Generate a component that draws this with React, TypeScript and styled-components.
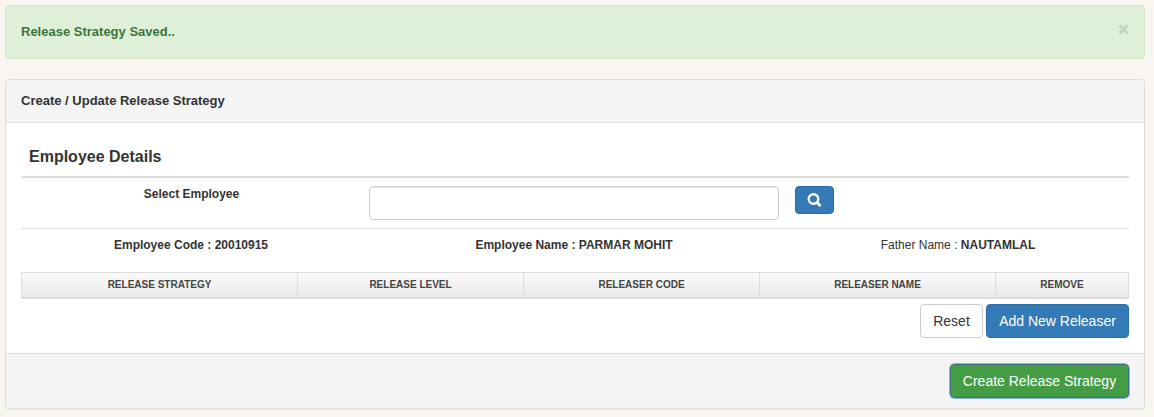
import React from 'react';
import styled, { createGlobalStyle } from 'styled-components';

const GlobalStyle = createGlobalStyle`
  *, *::before, *::after { box-sizing: border-box; }
  body {
    margin: 0;
    background: #f9f5f0;
    color: #333;
    font: 12px/20px "Liberation Sans", Arial, sans-serif;
  }
`;

const Page = styled.main`
  padding: 5px 9px 8px 5px;
`;

const Alert = styled.div`
  display: flex;
  justify-content: space-between;
  height: 54px;
  margin-bottom: 20px;
  padding: 16px 15px 14px;
  border: 1px solid #d6e9c6;
  border-radius: 4px;
  background: #dff0d8;
  color: #3c763d;
  font-size: 13px;
  font-weight: bold;
`;

const CloseButton = styled.button`
  display: flex;
  width: 11px;
  height: 11px;
  margin-top: 2px;
  padding: 0;
  border: 0;
  background: none;
  color: #bfd6b9;
`;

const Panel = styled.section`
  border: 1px solid #ddd;
  border-radius: 4px;
  background: #fff;
  box-shadow: 0 1px 1px rgba(0, 0, 0, 0.05);
  overflow: hidden;
`;

const PanelHeading = styled.header`
  height: 43px;
  padding: 11px 15px;
  border-bottom: 1px solid #ddd;
  background: #f4f4f4;
  font-size: 13px;
  font-weight: bold;
`;

const PanelBody = styled.div`
  height: 230px;
  padding: 15px;
`;

const PanelFooter = styled.footer`
  display: flex;
  justify-content: flex-end;
  height: 55px;
  padding: 10px 15px;
  border-top: 1px solid #ddd;
  background: #f4f4f4;
`;

const SectionTitle = styled.h2`
  height: 40px;
  margin: 0;
  padding: 8px;
  border-bottom: 2px solid #ddd;
  font-size: 16px;
  line-height: 21px;
`;

const SearchRow = styled.div`
  display: grid;
  grid-template-columns: 340px 426px 1fr;
  height: 50px;
  padding-top: 8px;
`;

const FieldLabel = styled.label`
  padding-left: 1px;
  font-weight: bold;
  line-height: 16px;
  text-align: center;
`;

const TextInput = styled.input`
  width: 410px;
  height: 34px;
  margin-left: 8px;
  padding: 6px 12px;
  border: 1px solid #ccc;
  border-radius: 4px;
  box-shadow: inset 0 1px 1px rgba(0, 0, 0, 0.075);
  font: inherit;
`;

const DetailsRow = styled.div`
  display: grid;
  grid-template-columns: 340px 426px 342px;
  height: 44px;
  padding-top: 8px;
  border-top: 1px solid #ddd;
  line-height: 16px;
  text-align: center;
`;

const Detail = styled.div<{ $bold?: boolean }>`
  font-weight: ${({ $bold }) => ($bold ? 'bold' : 'normal')};
`;

const ReleaserTable = styled.table`
  width: 100%;
  border-collapse: separate;
  border-spacing: 0;
  table-layout: fixed;
  border-left: 1px solid #ddd;
`;

const HeadRow = styled.tr`
  background: linear-gradient(#fafafa, #e9e9e9);
`;

const HeadCell = styled.th<{ $width: number }>`
  width: ${({ $width }) => $width}px;
  height: 27px;
  padding: 0;
  border: solid #ddd;
  border-width: 1px 1px 2px 0;
  color: #444;
  font-size: 10px;
  line-height: 12px;
  text-transform: uppercase;
`;

const Actions = styled.div`
  display: flex;
  justify-content: flex-end;
  gap: 3px;
  padding-top: 5px;
`;

const tones = {
  plain: { background: '#fff', border: '#ccc', color: '#333' },
  primary: { background: '#337ab7', border: '#2e6da4', color: '#fff' },
  success: { background: '#449d44', border: '#255625', color: '#fff' },
};

const Button = styled.button<{ $tone: keyof typeof tones; $width: number; $focused?: boolean }>`
  width: ${({ $width }) => $width}px;
  height: 34px;
  padding: 0;
  border: 1px solid ${({ $tone }) => tones[$tone].border};
  border-radius: 4px;
  background: ${({ $tone }) => tones[$tone].background};
  color: ${({ $tone }) => tones[$tone].color};
  font: 14px/20px "Liberation Sans", Arial, sans-serif;
  white-space: nowrap;
  ${({ $focused }) => $focused && `
    border-color: #396f7a;
    outline: 1px solid #91b5f2;
    outline-offset: 0;
  `}
`;

const SearchButton = styled(Button)`
  display: flex;
  align-items: center;
  justify-content: center;
  height: 28px;
  margin-left: 8px;
`;

const columns = [
  { name: 'Release Strategy', width: 276 },
  { name: 'Release Level', width: 226 },
  { name: 'Releaser Code', width: 236 },
  { name: 'Releaser Name', width: 236 },
  { name: 'Remove', width: 133 },
];

export default function App() {
  return (
    <Page>
      <GlobalStyle />
      <Alert role="alert">
        <span>Release Strategy Saved..</span>
        <CloseButton aria-label="Close">
          <svg width="11" height="11" viewBox="0 0 11 11" fill="none" stroke="currentColor" strokeWidth="3">
            <path d="M1.5 1.5l8 8M9.5 1.5l-8 8" />
          </svg>
        </CloseButton>
      </Alert>
      <Panel>
        <PanelHeading>Create / Update Release Strategy</PanelHeading>
        <PanelBody>
          <SectionTitle>Employee Details</SectionTitle>
          <SearchRow>
            <FieldLabel htmlFor="employee">Select Employee</FieldLabel>
            <TextInput id="employee" />
            <SearchButton $tone="primary" $width={39} aria-label="Search">
              <svg width="15" height="14" viewBox="0 0 15 14" fill="none" stroke="currentColor">
                <circle cx="6.5" cy="6" r="4.8" strokeWidth="2.4" />
                <path d="M10 9.5l2.8 2.8" strokeWidth="2.8" strokeLinecap="round" />
              </svg>
            </SearchButton>
          </SearchRow>
          <DetailsRow>
            <Detail $bold>Employee Code : 20010915</Detail>
            <Detail $bold>Employee Name : PARMAR MOHIT</Detail>
            <Detail>Father Name : <b>NAUTAMLAL</b></Detail>
          </DetailsRow>
          <ReleaserTable>
            <thead>
              <HeadRow>
                {columns.map(({ name, width }) => (
                  <HeadCell key={name} $width={width}>{name}</HeadCell>
                ))}
              </HeadRow>
            </thead>
          </ReleaserTable>
          <Actions>
            <Button $tone="plain" $width={63}>Reset</Button>
            <Button $tone="primary" $width={143}>Add New Releaser</Button>
          </Actions>
        </PanelBody>
        <PanelFooter>
          <Button $tone="success" $width={179} $focused>Create Release Strategy</Button>
        </PanelFooter>
      </Panel>
    </Page>
  );
}
